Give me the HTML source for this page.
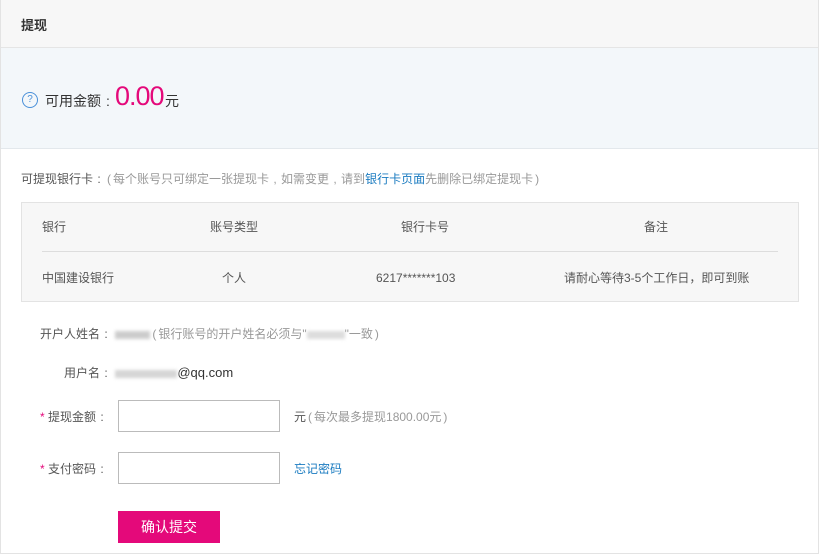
<!DOCTYPE html><html><head><meta charset="utf-8"><style>
*{margin:0;padding:0;box-sizing:border-box}
body{width:820px;height:554px;overflow:hidden;background:#fff;font-family:"Liberation Sans","Noto Sans CJK SC",sans-serif;font-size:12px;color:#555;position:relative}
.a{position:absolute;white-space:nowrap}
.blur{display:inline-block;background:#ccc;filter:blur(1.5px);height:8px;vertical-align:middle}
.c{display:inline-block;width:12px;text-align:center}
.p{display:inline-block;width:8px;text-align:center}
</style></head><body>
<div class="a" style="left:0;top:0;width:819px;height:554px;border:1px solid #e3e3e3;border-top:none"></div>
<div class="a" style="top:0;left:1px;width:817px;height:48px;background:#f7f7f7;border-bottom:1px solid #e5e5e5"></div>
<div class="a" style="left:21px;top:15px;font-size:13px;font-weight:bold;color:#333">提现</div>
<div class="a" style="left:1px;top:48px;width:817px;height:101px;background:#f3f7fa;border-bottom:1px solid #e3e8ec"></div>
<div class="a" style="left:22px;top:92px;width:16px;height:16px;border:1px solid #4a90d9;border-radius:50%;color:#4a90d9;font-size:10px;text-align:center;line-height:14px">?</div>
<div class="a" style="left:45px;top:91px;font-size:14px;color:#333">可用金额<span class="c" style="width:14px">:</span></div>
<div class="a" style="left:115px;top:79px;font-size:27px;color:#e4097a;line-height:34px;letter-spacing:-1px">0.00</div>
<div class="a" style="left:165px;top:91px;font-size:14px;color:#333">元</div>
<div class="a" style="left:21px;top:170px;color:#555">可提现银行卡<span class="c">:</span><span style="color:#999"><span class="p">(</span>每个账号只可绑定一张提现卡<span class="c">,</span>如需变更<span class="c">,</span>请到</span><span style="color:#1a7bc0">银行卡页面</span><span style="color:#999">先删除已绑定提现卡<span class="p">)</span></span></div>
<div class="a" style="left:21px;top:202px;width:778px;height:100px;background:#f7f7f7;border:1px solid #e3e3e3"></div>
<div class="a" style="left:42px;top:251px;width:736px;height:1px;background:#ddd"></div>
<div class="a" style="left:42px;top:218px">银行</div>
<div class="a" style="left:210px;top:218px">账号类型</div>
<div class="a" style="left:401px;top:218px">银行卡号</div>
<div class="a" style="left:644px;top:218px">备注</div>
<div class="a" style="left:42px;top:269px">中国建设银行</div>
<div class="a" style="left:222px;top:269px">个人</div>
<div class="a" style="left:376px;top:271px">6217*******103</div>
<div class="a" style="left:564px;top:269px">请耐心等待3-5个工作日，即可到账</div>
<div class="a" style="left:40px;top:325px">开户人姓名<span class="c">:</span> <span class="blur" style="width:35px"></span><span style="color:#999"><span class="p">(</span>银行账号的开户姓名必须与"<span class="blur" style="width:38px;background:#ddd"></span>"一致<span class="p">)</span></span></div>
<div class="a" style="left:64px;top:364px">用户名<span class="c">:</span> <span class="blur" style="width:62px;background:#d5d5d5"></span><span style="color:#333;font-size:13px">@qq.com</span></div>
<div class="a" style="left:40px;top:408px"><span style="color:#e4097a">*</span> 提现金额<span class="c">:</span></div>
<div class="a" style="left:118px;top:400px;width:162px;height:32px;border:1px solid #bbb;background:#fff"></div>
<div class="a" style="left:294px;top:408px">元<span style="color:#999"><span class="p">(</span>每次最多提现1800.00元<span class="p">)</span></span></div>
<div class="a" style="left:40px;top:460px"><span style="color:#e4097a">*</span> 支付密码<span class="c">:</span></div>
<div class="a" style="left:118px;top:452px;width:162px;height:32px;border:1px solid #bbb;background:#fff"></div>
<div class="a" style="left:294px;top:460px;color:#1a7bc0">忘记密码</div>
<div class="a" style="left:118px;top:511px;width:102px;height:32px;background:#e4097a;color:#fff;font-size:14px;text-align:center;line-height:32px">确认提交</div>
</body></html>
